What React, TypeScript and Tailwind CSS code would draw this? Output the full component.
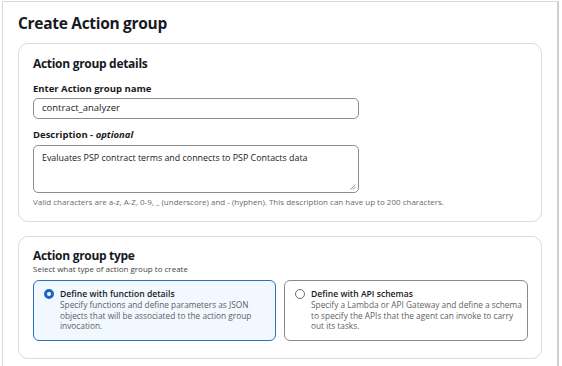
import React from "react";

const font = { fontFamily: '"Open Sans", "Noto Sans", sans-serif' };

function RadioCard({
  selected,
  title,
  desc,
}: {
  selected?: boolean;
  title: string;
  desc: string;
}) {
  return (
    <div
      className={
        "flex gap-[6px] h-[61px] rounded-[6px] pl-[9px] pr-[5px] pt-[7px] " +
        (selected
          ? "border-[1.5px] border-[#2f6fbf] bg-[#f1f8ff]"
          : "border-[1.5px] border-[#8a8a8a] bg-white")
      }
    >
      <div className="pt-[1px] pl-[1px]">
        {selected ? (
          <div className="w-[10px] h-[10px] rounded-full border-[3px] border-[#1b66c9] bg-white" />
        ) : (
          <div className="w-[10px] h-[10px] rounded-full border border-[#6f6f6f] bg-white" />
        )}
      </div>
      <div className="flex flex-col">
        <div className="text-[8.6px] font-semibold leading-[12px] text-[#1a1a1a]">{title}</div>
        <div className="text-[8.3px] leading-[10.5px] text-[#5f5f5f]">{desc}</div>
      </div>
    </div>
  );
}

export default function App() {
  return (
    <div className="w-[562px] h-[366px] bg-white overflow-hidden" style={font}>
      <div className="ml-[2px] mt-[1px] w-[557px] h-[380px] border-l border-t border-[#d9d9d9] border-r-2 border-r-[#cfcfcf]">
        <div className="pl-[15px] pr-[15px] pt-[11px]">
          <h1 className="text-[15.5px] font-bold leading-[20px] text-[#16191f] tracking-[-0.3px]">
            Create Action group
          </h1>

          {/* details */}
          <div className="mt-[10px] h-[179px] rounded-[10px] border border-[#dcdcdc] px-[14px] pt-[12px]">
            <div className="text-[12px] font-bold leading-[16px] text-[#16191f] tracking-[-0.3px]">
              Action group details
            </div>
            <div className="mt-[11px] text-[9.5px] font-bold leading-[12px] text-[#1a1a1a]">
              Enter Action group name
            </div>
            <div className="mt-[3px] w-[326px] h-[21px] rounded-[5px] border-[1.5px] border-[#8c8c8c] px-[8px] flex items-center text-[9.5px] text-[#1a1a1a]">
              contract_analyzer
            </div>
            <div className="mt-[10px] text-[9.5px] font-bold leading-[12px] text-[#1a1a1a]">
              Description - <span className="italic">optional</span>
            </div>
            <div className="relative mt-[4px] w-[326px] h-[48px] rounded-[5px] border-[1.5px] border-[#8c8c8c] px-[8px] pt-[5px] text-[8.9px] leading-[13px] text-[#1a1a1a]">
              Evaluates PSP contract terms and connects to PSP Contacts data
              <svg className="absolute right-[2px] bottom-[2px]" width="6" height="6" viewBox="0 0 6 6">
                <path d="M5.5 0.5 L0.5 5.5 M5.5 3 L3 5.5" stroke="#777" strokeWidth="0.8" />
              </svg>
            </div>
            <div className="mt-[4px] text-[8px] leading-[10px] text-[#6b6b6b]">
              Valid characters are a-z, A-Z, 0-9, _ (underscore) and - (hyphen). This description can have up to 200 characters.
            </div>
          </div>

          {/* type */}
          <div className="mt-[14px] h-[123px] rounded-[10px] border border-[#dcdcdc] px-[14px] pt-[11px]">
            <div className="text-[12px] font-bold leading-[15px] text-[#16191f] tracking-[-0.3px]">
              Action group type
            </div>
            <div className="text-[8px] leading-[11px] text-[#444]">
              Select what type of action group to create
            </div>
            <div className="mt-[6px] grid grid-cols-[243px_244px] gap-[8px]">
              <RadioCard
                selected
                title="Define with function details"
                desc="Specify functions and define parameters as JSON objects that will be associated to the action group invocation."
              />
              <RadioCard
                title="Define with API schemas"
                desc="Specify a Lambda or API Gateway and define a schema to specify the APIs that the agent can invoke to carry out its tasks."
              />
            </div>
          </div>
        </div>
      </div>
    </div>
  );
}
